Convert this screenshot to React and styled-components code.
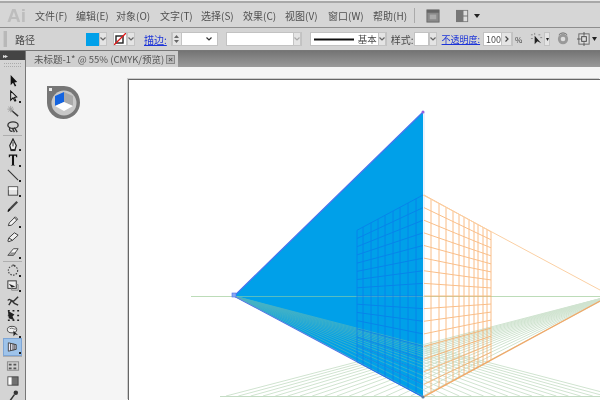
import React from 'react'
import styled, { createGlobalStyle } from 'styled-components'

const GlobalStyle = createGlobalStyle`
  html, body {
    margin: 0;
    padding: 0;
    width: 600px;
    height: 400px;
    overflow: hidden;
    background: #d6d6d6;
  }
`

const Window = styled.div`
  width: 600px;
  height: 400px;
  display: flex;
  flex-direction: column;
  overflow: hidden;
  font-family: "Noto Sans CJK SC", "Liberation Sans", sans-serif;
  font-size: 10px;
  color: #444;
  filter: blur(0.5px);
`

const MenuBar = styled.div`
  height: 23px;
  flex: none;
  display: flex;
  align-items: center;
  background: #d6d6d6;
  border-top: 1px solid #e8e8e8;
  border-bottom: 1px solid #8e8e8e;
  box-shadow: inset 0 2px 0 #a8a8a8;
  padding-top: 3px;
  box-sizing: content-box;
`

const Logo = styled.div`
  width: 35px;
  padding-left: 7px;
  box-sizing: border-box;
  font-family: "Liberation Sans", sans-serif;
  font-size: 19px;
  font-weight: 700;
  color: #bdbdbd;
`

const MenuItem = styled.span`
  width: ${p => p.$w}px;
  flex: none;
  color: #505050;
  white-space: nowrap;
`

const MenuDivider = styled.div`
  width: 1px;
  height: 15px;
  background: #aaa;
  margin: 0 11px 0 0;
`

const ControlBar = styled.div`
  height: 22px;
  flex: none;
  display: flex;
  align-items: center;
  background: #d4d4d4;
  border-bottom: 1px solid #777;
`

const Grip = styled.div`
  width: 3px;
  height: 16px;
  margin-left: 3px;
  background: #b8b8b8;
  border-left: 1px solid #c8c8c8;
`

const Label = styled.span`
  flex: none;
  white-space: nowrap;
  margin-left: ${p => p.$ml || 0}px;
  color: #4a4a4a;
  font-size: ${p => p.$size || 10}px;
`

const BlueLink = styled.span`
  flex: none;
  margin-left: ${p => p.$ml}px;
  color: #1c34d8;
  font-size: ${p => p.$size || 10}px;
  text-decoration: underline;
  white-space: nowrap;
`

const Field = styled.div`
  flex: none;
  width: ${p => p.$w}px;
  height: 14px;
  margin-left: ${p => p.$ml}px;
  display: flex;
  align-items: center;
  box-sizing: border-box;
  background: #fff;
  border: 1px solid #c2c2c2;
  font-size: 9px;
  color: #222;
`

const ChevronBox = styled.div`
  flex: none;
  width: ${p => p.$w || 8}px;
  height: 14px;
  background: #e4e4e4;
  border: 1px solid #c4c4c4;
  box-sizing: border-box;
  display: flex;
  align-items: center;
  justify-content: center;
`

const Swatch = styled.div`
  flex: none;
  width: 13px;
  height: 13px;
  margin-left: ${p => p.$ml}px;
  background: ${p => p.$color};
`

const Filler = styled.div`
  flex: 1;
`

const ToolIcon = styled.svg`
  flex: none;
  margin-left: ${p => p.$ml || 0}px;
  display: block;
`

const Main = styled.div`
  flex: 1;
  display: flex;
  min-height: 0;
`

const ToolPanel = styled.div`
  width: 26px;
  flex: none;
  display: flex;
  flex-direction: column;
  background: #d4d4d4;
  border-right: 1px solid #777;
  box-sizing: border-box;
`

const PanelHead = styled.div`
  height: 9px;
  flex: none;
  background: #444;
  color: #ddd;
  font-size: 6px;
  line-height: 9px;
  padding-left: 3px;
  letter-spacing: -1px;
`

const PanelGrip = styled.div`
  height: 2px;
  margin: 3px 4px 6px;
  flex: none;
  border-top: 1px dotted #aaa;
  border-bottom: 1px dotted #aaa;
`

const Tool = styled.div`
  height: ${p => (p.$active ? 16 : 15.3)}px;
  flex: none;
  position: relative;
  display: flex;
  align-items: center;
  justify-content: center;
  margin: ${p => (p.$active ? '0 4px' : '0')};
  background: ${p => (p.$active ? '#9ec3ea' : 'transparent')};
  outline: ${p => (p.$active ? '1px solid #7ea6d6' : 'none')};
  &::after {
    content: ${p => (p.$more ? '""' : 'none')};
    position: absolute;
    right: ${p => (p.$active ? '0' : '4px')};
    bottom: 1px;
    width: 2px;
    height: 2px;
    background: #222;
  }
`

const ToolSeparator = styled.div`
  height: 1px;
  margin: 1px 3px;
  flex: none;
  background: #aeaeae;
`

const Column = styled.div`
  flex: 1;
  min-width: 0;
  display: flex;
  flex-direction: column;
`

const TabBar = styled.div`
  height: 16px;
  flex: none;
  display: flex;
  background: linear-gradient(#747474, #9a9a9a);
`

const Tab = styled.div`
  width: 152px;
  display: flex;
  align-items: center;
  justify-content: space-between;
  padding: 0 3px 0 8px;
  box-sizing: border-box;
  background: #cfcfcf;
  font-size: 9.5px;
  color: #555;
  white-space: nowrap;
`

const TabClose = styled.div`
  width: 9px;
  height: 9px;
  box-sizing: border-box;
  background: #bbb;
  border: 1px solid #888;
  color: #555;
  font: 700 8px/7px "Liberation Sans", sans-serif;
  text-align: center;
`

const Workspace = styled.div`
  flex: 1;
  min-height: 0;
  position: relative;
  display: flex;
  background: #f5f5f5;
  padding: 12px 0 0 102px;
  overflow: hidden;
`

const Artboard = styled.div`
  flex: 1;
  background: #fff;
  border-left: 1px solid #666;
  border-top: 1px solid #666;
  box-shadow: -1px -1px 0 #ccc;
`

const GridWidget = styled.svg`
  position: absolute;
  left: 20px;
  top: 18px;
`

const menus = [
  ['文件(F)', 41], ['编辑(E)', 40], ['对象(O)', 44], ['文字(T)', 41], ['选择(S)', 42],
  ['效果(C)', 42], ['视图(V)', 43], ['窗口(W)', 45], ['帮助(H)', 41],
]

const I = ({ children, w = 15, h = 15, ml }) => (
  <ToolIcon $ml={ml} width={w} height={h} viewBox="0 0 15 15">{children}</ToolIcon>
)

const tools = [
  { icon: <path d="M5 1 L5 12 L7.5 9.5 L9.5 13.5 L11 12.5 L9 9 L12 8.5 Z" fill="#111" /> },
  { more: true, icon: <path d="M5 2 L5 12 L7.5 9.5 L9.5 13 L10.5 12.5 L9 9 L11.5 8.5 Z" fill="#ddd" stroke="#111" strokeWidth="1.1" /> },
  { icon: <g><path d="M6 7 L13 13" stroke="#333" strokeWidth="1.5" /><path d="M5 2v7M1.5 5.5h7M2.5 3l5 5M7.5 3l-5 5" stroke="#999" strokeWidth="0.9" /></g> },
  { icon: <g fill="none" stroke="#333" strokeWidth="1.4"><ellipse cx="7.5" cy="5.5" rx="5.5" ry="3.5" /><path d="M4 8.5 C3 11 5 12.5 7 12 M9 8 L12 13 M7 9l2 4" /></g> },
  { sep: true },
  { more: true, icon: <g><path d="M7.5 1 L11 8 L9.5 13 H5.5 L4 8 Z" fill="#eee" stroke="#222" strokeWidth="1.3" /><path d="M7.5 4v5" stroke="#222" /><rect x="5" y="12" width="5" height="2" fill="#222" /></g> },
  { more: true, icon: <path d="M3 1.5 H12 V4.5 H11 L10.5 3 H8.6 V12.5 L10 13.5 H5 L6.4 12.5 V3 H4.5 L4 4.5 H3 Z" fill="#111" /> },
  { more: true, icon: <path d="M2 2 L13 13" stroke="#333" strokeWidth="1.2" /> },
  { more: true, icon: <g><rect x="2.5" y="3" width="10" height="9" fill="#e2e2e2" stroke="#444" /><rect x="3" y="3.5" width="9" height="3" fill="#f8f8f8" /></g> },
  { icon: <g><path d="M3 12 L12 3" stroke="#444" strokeWidth="2.4" /><path d="M2 13.5 L4 11" stroke="#111" strokeWidth="1.6" /></g> },
  { more: true, icon: <g><path d="M2.5 12.5 L3.5 9.5 L10 3 L12.5 5.5 L6 12 Z" fill="#f4f4f4" stroke="#333" /><path d="M9 4l2.5 2.5" stroke="#333" /></g> },
  { icon: <g><path d="M2 12 L3 8.5 L9 3 L13 5.5 L7 11 L3 12.5 Z" fill="#eee" stroke="#333" /><path d="M3 8.5 L7 11" stroke="#333" /></g> },
  { more: true, icon: <g><path d="M2 11 L8 4 H13 L8 11 Z" fill="#f6f6f6" stroke="#444" /><path d="M2 11 H8 L10 8.5 H5" fill="#aaa" stroke="#444" strokeWidth="0.6" /></g> },
  { sep: true },
  { more: true, icon: <g fill="none" stroke="#444" strokeWidth="1.2" strokeDasharray="1.6 1.4"><circle cx="7.5" cy="8" r="5" /><path d="M7 2 L10 3" strokeDasharray="none" /></g> },
  { more: true, icon: <g><rect x="2" y="2" width="9" height="8" fill="#eee" stroke="#333" /><path d="M3 5l3 4 4-1z" fill="#222" /><path d="M11 6h2v6H6v-2" fill="none" stroke="#888" /></g> },
  { icon: <g fill="none" stroke="#333" strokeWidth="1.5"><path d="M2 7 C4 3 6 10 9 7 L13 3" /><path d="M3 12 L6 7 L9 10 L13 12" /></g> },
  { icon: <g><path d="M2 2 L9 6 L7 8 L9 12 L3 10 Z" fill="#222" /><path d="M2 2h2M7 2h2M12 2h2M2 7h1M12 7h2M2 12h2M7 12h2M12 12h2" stroke="#222" strokeWidth="1.6" /></g> },
  { more: true, icon: <g><ellipse cx="6.5" cy="6" rx="5" ry="3.5" fill="#eee" stroke="#444" /><path d="M4 5 C7 3 9 7 11 5" fill="none" stroke="#666" /><path d="M8 7 L8 13 L10 11 L13 12 Z" fill="#222" /></g> },
  { active: true, more: true, icon: <g><path d="M2.5 3 L11 5 V10 L2.5 12 Z" fill="#eef" stroke="#444" /><path d="M5 3.5v8M7.5 4v7M9.5 4.5v6" stroke="#333" /></g> },
  { sep: true },
  { icon: <g><rect x="1.5" y="3" width="12" height="9" fill="#cfcfcf" stroke="#888" /><path d="M3 5h3v2H3zM8 5h3v2H8zM3 9h3v2H3zM8 9h3v2H8z" fill="#555" /></g> },
  { icon: <g><rect x="2" y="3" width="11" height="9" fill="#fff" stroke="#555" /><rect x="6" y="3" width="7" height="9" fill="#333" opacity="0.7" /></g> },
  { more: true, icon: <g><path d="M4 13 L9 6" stroke="#333" strokeWidth="1.6" /><circle cx="10.5" cy="4" r="2.4" fill="#333" /></g> },
]

const Chevron = ({ color = '#666' }) => (
  <svg width="6" height="4" viewBox="0 0 6 4"><path d="M0.5 0.5 L3 3 L5.5 0.5" fill="none" stroke={color} strokeWidth="1.2" /></svg>
)

// drawing coordinates are page pixels, viewBox keeps them
const LEFT_VP = [234, 296]
const RIGHT_VP = [610, 296]
const rows = Array.from({ length: 17 }, (_, i) => 195 + (i * 202) / 16)
const blueCols = [357, 363, 371, 378, 385, 393, 400, 408, 416]
const orangeCols = [431, 439, 446, 453, 459, 464, 469, 474, 478, 483, 487, 491]
const groundLeft = Array.from({ length: 17 }, (_, i) => 423 + (i * 194) / 16)
const groundRight = Array.from({ length: 17 }, (_, i) => 226 + (i * 197) / 16)

const atX = (vp, y0, x0, x) => vp[1] + ((y0 - vp[1]) * (x - vp[0])) / (x0 - vp[0])

const PerspectiveDrawing = () => (
  <svg width="471" height="320" viewBox="129 80 471 320" style={{ display: 'block' }}>
    <g stroke="#bcd8bc" strokeWidth="1" opacity="0.7">
      {groundRight.map(x => <line key={x} x1={RIGHT_VP[0]} y1={RIGHT_VP[1]} x2={x} y2={396} />)}
      {groundLeft.map(x => <line key={x} x1={LEFT_VP[0]} y1={LEFT_VP[1]} x2={x} y2={396} />)}
    </g>
    <line x1="191" y1="296.5" x2="600" y2="296.5" stroke="#bcdcb8" />
    <line x1="220" y1="396.5" x2="600" y2="396.5" stroke="#c4dcc4" />
    <polygon points="234,296 423,112 423,397" fill="#00a0e9" />
    <path d="M423 112 L234 296 L423 397" fill="none" stroke="#4a72ee" strokeWidth="1.2" />
    <line x1="424" y1="112" x2="424" y2="397" stroke="#d4e6fc" />
    <line x1="234" y1="296.5" x2="423" y2="296.5" stroke="#6cc4b8" strokeWidth="0.8" />
    <clipPath id="blueFace"><polygon points="234,296 423,112 423,397" /></clipPath>
    <g stroke="#8cc4a0" strokeWidth="0.8" opacity="0.5" clipPath="url(#blueFace)">
      {groundLeft.map(x => <line key={x} x1={LEFT_VP[0]} y1={LEFT_VP[1]} x2={x} y2={396} />)}
    </g>
    <g stroke="#0a78ea" strokeWidth="1" opacity="0.7">
      {rows.map(y => <line key={y} x1={423} y1={y} x2={357} y2={atX(LEFT_VP, y, 423, 357)} />)}
      {blueCols.map(x => (
        <line key={x} x1={x} y1={atX(LEFT_VP, 195, 423, x)} x2={x} y2={atX(LEFT_VP, 397, 423, x)} />
      ))}
    </g>
    <g stroke="#f8a860" strokeWidth="1" opacity="0.75">
      {rows.map(y => <line key={y} x1={424} y1={y} x2={491} y2={atX(RIGHT_VP, y, 423, 491)} />)}
      {orangeCols.map(x => (
        <line key={x} x1={x} y1={atX(RIGHT_VP, 195, 423, x)} x2={x} y2={atX(RIGHT_VP, 397, 423, x)} />
      ))}
    </g>
    <line x1="423" y1="195" x2="600" y2="290" stroke="#fbd0a4" />
    <line x1="423" y1="397" x2="600" y2="301" stroke="#f0a868" strokeWidth="1.2" />
    <rect x="232" y="293" width="4" height="4" fill="#8aa8f0" stroke="#4a72ee" strokeWidth="0.6" />
    <circle cx="423" cy="112" r="1.5" fill="#9a60e0" />
    <circle cx="423" cy="397" r="1.6" fill="#6080a0" />
  </svg>
)

export default function App() {
  return (
    <Window>
      <GlobalStyle />
      <MenuBar>
        <Logo>Ai</Logo>
        {menus.map(([label, w]) => <MenuItem key={label} $w={w}>{label}</MenuItem>)}
        <MenuDivider />
        <I w={14} h={14}>
          <rect x="1" y="1" width="13" height="13" fill="#8a8a8a" stroke="#6a6a6a" />
          <rect x="1" y="1" width="13" height="3" fill="#666" />
          <rect x="4" y="6" width="7" height="5" fill="#aaa" />
        </I>
        <I ml={12} w={22} h={14}>
          <path d="M0 1 H13 V14 H0 Z" fill="#777" />
          <path d="M8 2 H12 V7 H8 Z M8 8 H12 V13 H8 Z" fill="#ddd" />
        </I>
        <svg width="6" height="4" viewBox="0 0 6 4"><path d="M0 0 H6 L3 4 Z" fill="#222" /></svg>
      </MenuBar>
      <ControlBar>
        <Grip />
        <Label $ml={8}>路径</Label>
        <Swatch $ml={51} $color="#00a0e9" />
        <ChevronBox><Chevron /></ChevronBox>
        <Field $w={14} $ml={6}>
          <svg width="12" height="12" viewBox="0 0 12 12"><rect x="2" y="3" width="7" height="7" fill="none" stroke="#222" strokeWidth="1.4" /><path d="M0 12 L12 0" stroke="#e01818" strokeWidth="1.3" /></svg>
        </Field>
        <ChevronBox><Chevron /></ChevronBox>
        <BlueLink $ml={9}>描边:</BlueLink>
        <Field $w={47} $ml={4}>
          <ChevronBox $w={10}><svg width="5" height="8" viewBox="0 0 5 8"><path d="M0 3 L2.5 0 L5 3 Z M0 5 L2.5 8 L5 5 Z" fill="#666" /></svg></ChevronBox>
          <Filler />
          <Chevron color="#333" />
          <Label $ml={5} />
        </Field>
        <Field $w={76} $ml={8}>
          <Filler />
          <ChevronBox><Chevron color="#aaa" /></ChevronBox>
        </Field>
        <Field $w={77} $ml={8}>
          <svg width="44" height="3" viewBox="0 0 44 3" style={{ marginLeft: 3 }}><rect y="0.5" width="40" height="2" fill="#111" /></svg>
          <Label $size={9.5}>基本</Label>
          <Filler />
          <ChevronBox><Chevron /></ChevronBox>
        </Field>
        <Label $ml={4}>样式:</Label>
        <Field $w={15} $ml={0} />
        <ChevronBox><Chevron /></ChevronBox>
        <BlueLink $ml={5} $size={9}>不透明度:</BlueLink>
        <Field $w={30} $ml={3}>
          <Label $ml={2} $size={9}>100</Label>
          <Filler />
          <ChevronBox $w={11}><svg width="4" height="6" viewBox="0 0 4 6"><path d="M0.5 0.5 L3 3 L0.5 5.5" fill="none" stroke="#444" strokeWidth="1.2" /></svg></ChevronBox>
        </Field>
        <Label $ml={2} $size={8}>%</Label>
        <I ml={8} w={14} h={14}>
          <path d="M5 4 L5 13 L8 10 L12 12 Z" fill="#222" />
          <path d="M1 3h2M5 1v2M9 3h2M1 7h2M11 6h2" stroke="#888" strokeWidth="1" />
        </I>
        <ChevronBox $w={6}><svg width="3" height="3" viewBox="0 0 3 3"><path d="M0 0 H3 L1.5 3 Z" fill="#222" /></svg></ChevronBox>
        <I ml={6} w={14} h={14}>
          <circle cx="7.5" cy="7.5" r="5.5" fill="#999" />
          <circle cx="7.5" cy="7.5" r="2.5" fill="#ddd" />
          <path d="M3 3 A6 6 0 0 1 12 3" fill="none" stroke="#666" />
        </I>
        <I ml={7} w={14} h={14}>
          <rect x="2" y="2" width="11" height="11" fill="#ddd" stroke="#666" />
          <rect x="5" y="5" width="5" height="5" fill="none" stroke="#444" />
          <path d="M7.5 0v4M7.5 11v4M0 7.5h4" stroke="#555" />
        </I>
        <svg width="5" height="4" viewBox="0 0 5 4" style={{ marginLeft: 1 }}><path d="M0 0 H5 L2.5 4 Z" fill="#222" /></svg>
      </ControlBar>
      <Main>
        <ToolPanel>
          <PanelHead>▸▸</PanelHead>
          <PanelGrip />
          {tools.map((t, i) => (t.sep
            ? <ToolSeparator key={i} />
            : <Tool key={i} $more={t.more} $active={t.active}><I w={14} h={14}>{t.icon}</I></Tool>))}
        </ToolPanel>
        <Column>
          <TabBar>
            <Tab>
              未标题-1* @ 55% (CMYK/预览)
              <TabClose>×</TabClose>
            </Tab>
          </TabBar>
          <Workspace>
            <GridWidget width="36" height="36" viewBox="0 0 36 36">
              <path d="M1 1 H18 A16.5 16.5 0 1 1 1 18 Z" fill="#767676" />
              <circle cx="18" cy="18" r="12.5" fill="#c8c8c8" />
              <rect x="3" y="3" width="3" height="3" fill="#eee" />
              <path d="M18 7 L27 11 V21 L18 17 Z" fill="#a9a9a9" />
              <path d="M18 7 L9 11 V21 L18 17 Z" fill="#1464e0" />
              <path d="M9 21 L18 17 L27 21 L18 26 Z" fill="#fff" />
            </GridWidget>
            <Artboard>
              <PerspectiveDrawing />
            </Artboard>
          </Workspace>
        </Column>
      </Main>
    </Window>
  )
}
